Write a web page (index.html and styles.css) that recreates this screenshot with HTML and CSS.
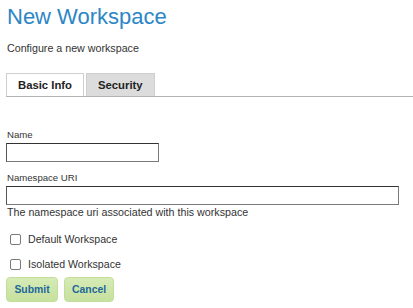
FILE: index.html
```html
<!DOCTYPE html>
<html>
<head>
<meta charset="utf-8">
<link rel="stylesheet" href="styles.css">
</head>
<body>
<div class="page">
  <h1 class="title">New Workspace</h1>
  <p class="subtitle">Configure a new workspace</p>
  <div class="tabs">
    <div class="tab tab-active">Basic Info</div>
    <div class="tab">Security</div>
  </div>
  <form class="form">
    <label class="field-label field-name">Name</label>
    <input class="text-input input-name" type="text">
    <label class="field-label field-uri">Namespace URI</label>
    <input class="text-input input-uri" type="text">
    <p class="help">The namespace uri associated with this workspace</p>
    <label class="check-row row-first"><input type="checkbox" class="check"><span>Default Workspace</span></label>
    <label class="check-row row-second"><input type="checkbox" class="check"><span>Isolated Workspace</span></label>
    <div class="buttons">
      <button type="button" class="btn btn-submit">Submit</button>
      <button type="button" class="btn btn-cancel">Cancel</button>
    </div>
  </form>
</div>
</body>
</html>
```

FILE: styles.css
```css
html, body {
  margin: 0;
  padding: 0;
  background: #ffffff;
}
body {
  font-family: "Liberation Sans", Arial, sans-serif;
  color: #333333;
}
.page {
  padding-left: 6px;
}
.title {
  margin: 4px 0 0 1px;
  font-size: 22px;
  line-height: 26px;
  font-weight: normal;
  color: #2c86c6;
}
.subtitle {
  margin: 12px 0 0 1px;
  font-size: 10.7px;
  line-height: 13px;
}
.tabs {
  margin-top: 18px;
  display: flex;
  gap: 2px;
  border-bottom: 1px solid #b4b4b4;
}
.tab {
  height: 22px;
  line-height: 22px;
  font-size: 11.3px;
  font-weight: bold;
  color: #222;
  border: 1px solid #cfcfcf;
  border-bottom: none;
  background: #dcdcdc;
  padding: 0 11px;
  box-sizing: content-box;
}
.tab-active {
  background: #ffffff;
  width: 54px;
}
.tab:not(.tab-active) {
  width: 45px;
}
.form {
  display: flex;
  flex-direction: column;
  align-items: flex-start;
}
.field-label {
  font-size: 9.6px;
  line-height: 12px;
  margin-left: 1px;
}
.field-name {
  margin-top: 32px;
}
.field-uri {
  margin-top: 10px;
}
.text-input {
  margin: 2px 0 0 0;
  height: 19px;
  box-sizing: border-box;
  border: 1px solid #7a7a7a;
  border-top-color: #333;
  border-left-color: #555;
  padding: 0 3px;
  background: #fff;
}
.input-name {
  width: 153px;
}
.input-uri {
  width: 393px;
}
.help {
  margin: 1px 0 0 1px;
  font-size: 10.7px;
  line-height: 13px;
}
.check-row {
  display: flex;
  align-items: center;
  gap: 7px;
  font-size: 10.6px;
  line-height: 13px;
  margin-left: 4px;
}
.row-first {
  margin-top: 14px;
}
.row-second {
  margin-top: 12px;
}
.check {
  appearance: none;
  -webkit-appearance: none;
  margin: 0;
  width: 11px;
  height: 11px;
  box-sizing: border-box;
  border: 1px solid #7a7a7a;
  border-radius: 2px;
  background: #fff;
}
.buttons {
  display: flex;
  gap: 6px;
  margin-top: 6px;
}
.btn {
  height: 25px;
  padding: 0 7px;
  font-family: "Liberation Sans", Arial, sans-serif;
  font-size: 10.4px;
  font-weight: bold;
  color: #22689a;
  background: linear-gradient(#d6ebb6, #c6e09e);
  border: 1px solid #c2de9a;
  border-radius: 4px;
}
.btn-submit {
  width: 52px;
}
.btn-cancel {
  width: 50px;
}
```
